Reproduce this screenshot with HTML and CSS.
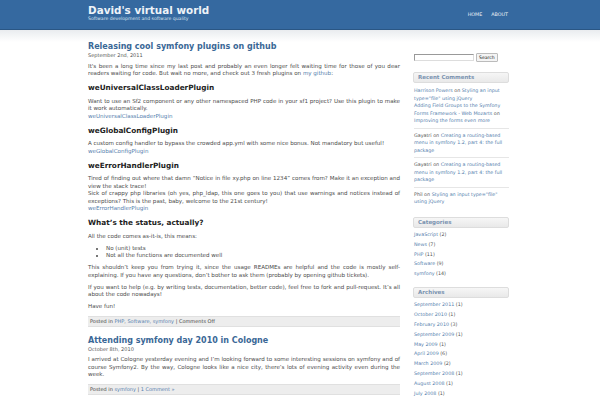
FILE: index.html
```html
<!DOCTYPE html>
<html>
<head>
<meta charset="utf-8">
<link rel="stylesheet" href="styles.css">
</head>
<body>
<div class="topbar">
  <div class="wrap head">
    <div class="brand">
      <div class="site-title">David's virtual world</div>
      <div class="tagline">Software development and software quality</div>
    </div>
    <nav class="nav"><a>Home</a><a>About</a></nav>
  </div>
</div>
<div class="page">
  <div class="wrap cols">
    <main class="main">
      <article class="post">
        <h2 class="post-title">Releasing cool symfony plugins on github</h2>
        <div class="date">September 2nd, 2011</div>
        <p>It's been a long time since my last post and probably an even longer felt waiting time for those of you dear readers waiting for code. But wait no more, and check out 3 fresh plugins on <a>my github</a>:</p>
        <h3>weUniversalClassLoaderPlugin</h3>
        <p>Want to use an Sf2 component or any other namespaced PHP code in your sf1 project? Use this plugin to make it work automatically.<br><a>weUniversalClassLoaderPlugin</a></p>
        <h3>weGlobalConfigPlugin</h3>
        <p>A custom config handler to bypass the crowded app.yml with some nice bonus. Not mandatory but useful!<br><a>weGlobalConfigPlugin</a></p>
        <h3>weErrorHandlerPlugin</h3>
        <p>Tired of finding out where that damn “Notice in file xy.php on line 1234” comes from? Make it an exception and view the stack trace!<br>Sick of crappy php libraries (oh yes, php_ldap, this one goes to you) that use warnings and notices instead of exceptions? This is the past, baby, welcome to the 21st century!<br><a>weErrorHandlerPlugin</a></p>
        <h3>What’s the status, actually?</h3>
        <p>All the code comes as-it-is, this means:</p>
        <ul>
          <li>No (unit) tests</li>
          <li>Not all the functions are documented well</li>
        </ul>
        <p>This shouldn’t keep you from trying it, since the usage READMEs are helpful and the code is mostly self-explaining. If you have any questions, don’t bother to ask them (probably by opening github tickets).</p>
        <p>If you want to help (e.g. by writing tests, documentation, better code), feel free to fork and pull-request. It’s all about the code nowadays!</p>
        <p>Have fun!</p>
        <div class="meta">Posted in <a>PHP</a>, <a>Software</a>, <a>symfony</a> | Comments Off</div>
      </article>
      <article class="post">
        <h2 class="post-title">Attending symfony day 2010 in Cologne</h2>
        <div class="date">October 8th, 2010</div>
        <p>I arrived at Cologne yesterday evening and I’m looking forward to some interesting sessions on symfony and of course Symfony2. By the way, Cologne looks like a nice city, there’s lots of evening activity even during the week.</p>
        <div class="meta">Posted in <a>symfony</a> | <a>1 Comment »</a></div>
      </article>
    </main>
    <aside class="side">
      <form class="search"><input class="search-input" type="text"><button class="search-btn" type="button">Search</button></form>
      <h4 class="widget-title">Recent Comments</h4>
      <ul class="comments">
        <li class="first"><a>Harrison Powers</a> on <a>Styling an input type="file" using jQuery</a></li>
        <li class="second"><a>Adding Field Groups to the Symfony Forms Framework - Web Mozarts</a> on <a>Improving the forms even more</a></li>
        <li>Gayatri on <a>Creating a routing-based menu in symfony 1.2, part 4: the full package</a></li>
        <li>Gayatri on <a>Creating a routing-based menu in symfony 1.2, part 4: the full package</a></li>
        <li>Phil on <a>Styling an input type="file" using jQuery</a></li>
      </ul>
      <h4 class="widget-title">Categories</h4>
      <ul class="links">
        <li><a>JavaScript</a> (2)</li>
        <li><a>News</a> (7)</li>
        <li><a>PHP</a> (11)</li>
        <li><a>Software</a> (9)</li>
        <li><a>symfony</a> (14)</li>
      </ul>
      <h4 class="widget-title">Archives</h4>
      <ul class="links">
        <li><a>September 2011</a> (1)</li>
        <li><a>October 2010</a> (1)</li>
        <li><a>February 2010</a> (3)</li>
        <li><a>September 2009</a> (1)</li>
        <li><a>May 2009</a> (1)</li>
        <li><a>April 2009</a> (6)</li>
        <li><a>March 2009</a> (2)</li>
        <li><a>September 2008</a> (1)</li>
        <li><a>August 2008</a> (1)</li>
        <li><a>July 2008</a> (1)</li>
      </ul>
    </aside>
  </div>
</div>
</body>
</html>
```
FILE: styles.css
```css
html, body { margin: 0; padding: 0; }
body {
  font-family: "DejaVu Sans", Verdana, sans-serif;
  color: #4a4a4a;
  background: #fff;
  overflow: hidden;
  height: 400px;
}
a { color: #5580ad; text-decoration: none; }
.wrap { width: 424px; margin: 0 auto; }
.topbar {
  background: #3569a0;
  height: 29px;
  border-bottom: 1px solid #2a5684;
}
.head { display: flex; justify-content: space-between; }
.brand { padding-top: 4px; }
.site-title {
  font-size: 10.4px;
  font-weight: bold;
  color: #eef3f8;
  line-height: 12px;
}
.tagline { font-size: 4.6px; color: #d8e2ee; line-height: 6px; }
.nav {
  display: flex;
  gap: 9px;
  padding-top: 12px;
  padding-right: 4px;
  font-size: 4.8px;
  text-transform: uppercase;
}
.nav a { color: #f2f5f9; }
.page { background: linear-gradient(#e9ecef, #fff 12px) no-repeat; }
.cols { display: flex; gap: 13px; padding-top: 12px; }
.main { width: 312px; }
.post-title {
  margin: 0;
  font-size: 8px;
  line-height: 10px;
  color: #3a6796;
}
.date { font-size: 5px; line-height: 6px; color: #555; }
.post p {
  font-size: 5.55px;
  line-height: 7.5px;
  margin: 4.5px 0;
  text-align: justify;
}
.post h3 {
  font-size: 7.3px;
  line-height: 9px;
  color: #222;
  margin: 5.5px 0;
}
.post ul {
  margin: 4.5px 0;
  padding-left: 18px;
  font-size: 5.55px;
  line-height: 7.5px;
}
.meta {
  background: #ededed;
  border-top: 1px solid #e0e0e0;
  border-bottom: 1px solid #e0e0e0;
  font-size: 5px;
  line-height: 9px;
  padding: 0 2px;
  color: #444;
  margin: 5px 0 9px;
}
.side { width: 96px; padding-top: 11px; }
.search { display: flex; gap: 2px; align-items: center; margin: 0 0 10px 1px; }
.search-input {
  width: 58px;
  height: 5px;
  padding: 0;
  border: 1px solid #999;
  border-right-color: #ddd;
  border-bottom-color: #ddd;
  margin: 0;
}
.search-btn {
  font-family: "DejaVu Sans", sans-serif;
  font-size: 4.6px;
  height: 9px;
  padding: 0 2px;
  margin: 0;
  background: #f4f4f4;
  border: 1px solid #bbb;
  border-radius: 1px;
  color: #222;
}
.widget-title {
  margin: 8px 0 0;
  font-size: 5.5px;
  line-height: 9px;
  color: #7a93b0;
  background: linear-gradient(#f6f6f6, #e9e9e9);
  border: 1px solid #ddd;
  border-radius: 2px;
  padding: 0 4px;
}
.search + .widget-title { margin-top: 0; }
.comments, .links {
  list-style: none;
  margin: 0;
  padding: 0 0 0 1px;
  font-size: 4.8px;
  color: #555;
}
.comments { margin-top: 1px; }
.comments li {
  line-height: 7.5px;
  padding: 3px 0;
  border-bottom: 1px solid #e6e6e6;
}
.comments li.first { border-bottom: none; padding-bottom: 0; }
.comments li.second { padding-top: 0; }
.comments li:last-child { border-bottom: none; }
.links { padding-top: 2.5px; margin-bottom: 1px; }
.links li { line-height: 9.8px; }
```
